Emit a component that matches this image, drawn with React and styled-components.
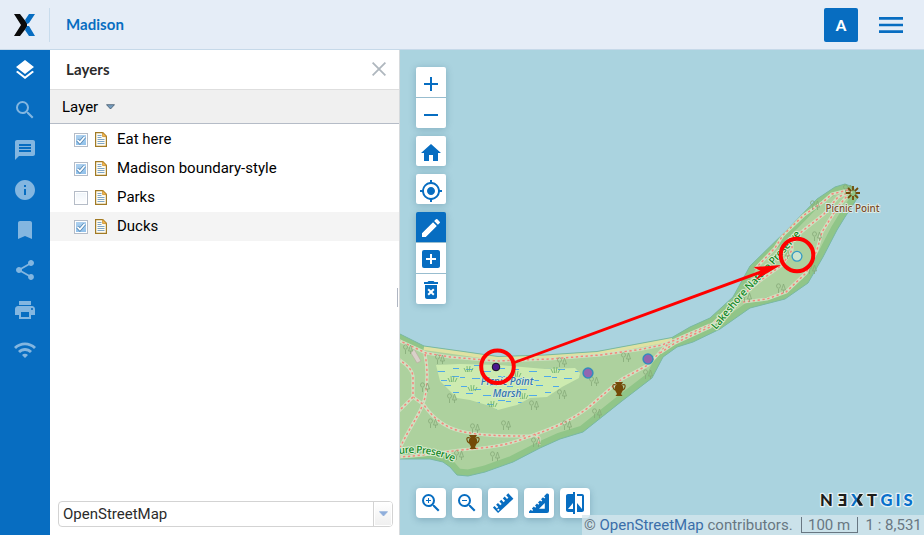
import React from "react";
import styled, { createGlobalStyle, css } from "styled-components";
import {
  MdLayers, MdSearch, MdMessage, MdInfo, MdBookmark, MdShare, MdPrint, MdWifi,
  MdAdd, MdRemove, MdHome, MdMyLocation, MdEdit, MdAddBox, MdDeleteForever,
  MdZoomIn, MdZoomOut, MdCompare,
} from "react-icons/md";

const BLUE = "#076dc1";

const Global = createGlobalStyle`
  * { box-sizing: border-box; }
  body { margin: 0; overflow: hidden; font-family: Roboto, "Liberation Sans", sans-serif; }
  svg { display: block; }
`;

const Page = styled.div`
  display: flex;
  flex-direction: column;
  width: 924px;
  height: 535px;
`;
const Header = styled.header`
  display: flex;
  align-items: center;
  height: 50px;
  flex: none;
  padding-right: 21px;
  background: #e5edf7;
  border-bottom: 1px solid #c6d9e9;
`;
const LogoBox = styled.div`
  display: flex;
  align-items: center;
  justify-content: center;
  width: 50px;
  height: 34px;
  border-right: 1px solid #c9dcec;
`;
const Title = styled.h1`
  margin: 0 auto 0 16px;
  padding-bottom: 1px;
  font: 700 15px/20px Lato, sans-serif;
  letter-spacing: 0.05px;
  color: ${BLUE};
`;
const Avatar = styled.button`
  width: 34px;
  height: 34px;
  margin: 1px 21px 0 0;
  padding: 0;
  border: 0;
  border-radius: 2px;
  background: ${BLUE};
  color: #fff;
  font: 900 15px/33px Lato, sans-serif;
`;
const Body = styled.div`
  display: flex;
  flex: 1;
  min-height: 0;
`;
const Sidebar = styled.nav`
  display: flex;
  flex-direction: column;
  width: 50px;
  background: ${BLUE};
`;
const NavItem = styled.div`
  display: grid;
  place-items: center;
  height: 40px;
  font-size: 24px;
  color: ${(p) => (p.$active ? "#fff" : "#83b6e0")};
`;
const Panel = styled.section`
  display: flex;
  flex-direction: column;
  width: 350px;
  background: #fff;
  border-right: 1px solid #d6dadd;
`;
const PanelHead = styled.div`
  display: flex;
  align-items: center;
  justify-content: space-between;
  height: 40px;
  padding: 0 13px 1px 16px;
  border-bottom: 1px solid #dedede;
`;
const PanelTitle = styled.h2`
  margin: 0;
  font: 700 15px/20px Lato, sans-serif;
  letter-spacing: 0.1px;
  color: #2b2b2b;
`;
const ColumnHead = styled.div`
  display: flex;
  align-items: center;
  gap: 8px;
  height: 34px;
  padding-left: 12px;
  font-size: 15px;
  background: #f0f0f0;
  border-bottom: 1px solid #b5bcc7;
`;
const Tree = styled.div`
  display: flex;
  flex-direction: column;
  padding-top: 1px;
  flex: 1;
`;
const Row = styled.div`
  display: flex;
  align-items: center;
  height: 29px;
  padding-left: 24px;
  font-size: 15px;
  color: #000;
  background: ${(p) => (p.$hover ? "#f4f4f4" : "transparent")};
`;
const RowLabel = styled.span`
  margin-left: 10px;
  line-height: 20px;
  padding-bottom: 1px;
`;
const CheckBox = styled.span`
  display: grid;
  place-items: center;
  width: 14px;
  height: 14px;
  margin-right: 7px;
  border: 1px solid #b5bcc7;
  box-shadow: inset 0 0 0 1px #fff;
  background: ${(p) => (p.$on ? "linear-gradient(#b1d2ef, #8fc0ea)" : "linear-gradient(#eef4f9, #fff)")};
`;
const Grip = styled.div`
  position: absolute;
  left: -3px;
  top: 238px;
  width: 1px;
  height: 19px;
  background: #b0b6c2;
`;
const Select = styled.div`
  display: flex;
  height: 26px;
  margin: 0 6px 8px 8px;
  border: 1px solid #d3d3d3;
  border-radius: 4px;
  overflow: hidden;
  font-size: 15px;
  line-height: 25px;
  color: #2b2b2b;
`;
const SelectValue = styled.span`
  flex: 1;
  padding-left: 4px;
`;
const SelectArrow = styled.span`
  display: grid;
  place-items: center;
  width: 19px;
  border-left: 1px solid #d3d3d3;
  box-shadow: inset 0 0 0 1px #fff;
  background: linear-gradient(#fff, #efefef);
`;
const MapArea = styled.main`
  position: relative;
  flex: 1;
  background: #aad3df;
`;
const MapTools = styled.div`
  position: absolute;
  left: 16px;
  top: 17px;
  display: flex;
  flex-direction: column;
  gap: 8px;
`;
const BottomTools = styled.div`
  position: absolute;
  left: 16px;
  top: 438px;
  display: flex;
  gap: 6px;
`;
const Group = styled.div`
  display: flex;
  flex-direction: column;
  gap: 1px;
  border-radius: 2px;
  overflow: hidden;
  background: #98bdcf;
  box-shadow: 0 1px 7px rgba(30, 80, 110, 0.28);
`;
const ToolButton = styled.button`
  display: grid;
  place-items: center;
  width: 30px;
  height: 30px;
  padding: ${(p) => p.$drop || 0}px 0 0;
  border: 0;
  font-size: 24px;
  color: ${(p) => (p.$active ? "#fff" : BLUE)};
  background: ${(p) => (p.$active ? BLUE : "#fff")};
  ${(p) => p.$floating && css`
    border-radius: 4px;
    box-shadow: 0 2px 7px rgba(30, 80, 110, 0.28);
  `}
`;
const Attribution = styled.div`
  position: absolute;
  right: 0;
  bottom: 0;
  display: flex;
  align-items: center;
  width: 342px;
  height: 20px;
  padding-left: 2px;
  background: rgba(213, 230, 236, 0.76);
  color: #687782;
  font-size: 15px;
  line-height: 20px;
  white-space: pre;
`;
const Link = styled.span`
  color: #3a6ea9;
`;
const ScaleLine = styled.span`
  width: 57px;
  height: 16px;
  margin: 0 8px 0 8px;
  border: 1px solid #687782;
  border-top: 0;
  text-align: center;
  line-height: 16px;
`;

const NAV = [MdLayers, MdSearch, MdMessage, MdInfo, MdBookmark, MdShare, MdPrint, MdWifi];
const LAYERS = [
  { name: "Eat here", on: true },
  { name: "Madison boundary-style", on: true },
  { name: "Parks", on: false },
  { name: "Ducks", on: true, hover: true },
];

const BrandMark = () => (
  <svg width="22" height="22" viewBox="0 0 22 22">
    <path d="M0 0h6l7 9v4l-7 9H0l7-11z" fill="#0a0a0a" />
    <path d="M15 0h6l-6 9-2 1-2-4zM11 16l2-4h2l6 10h-6z" fill={BLUE} />
  </svg>
);
const BurgerIcon = () => (
  <svg width="24" height="18" viewBox="0 0 24 18">
    <path d="M0 1h24v2.700H0zM0 7.700h24v2.600H0zM0 14.300h24V17H0z" fill={BLUE} />
  </svg>
);
const CloseMark = () => (
  <svg width="14" height="14" viewBox="0 0 14 14">
    <path d="M.6.6l12.800 12.800M13.400.6L.6 13.400" stroke="#afb7be" strokeWidth="1.8" />
  </svg>
);
const Caret = ({ fill, stroke }) => (
  <svg width="9" height="6" viewBox="0 0 9 6">
    <path d="M.5 .7h8L4.5 5z" fill={fill} stroke={stroke} strokeWidth="0.8" />
  </svg>
);
const PageIcon = () => (
  <svg width="12" height="15" viewBox="0 0 12 15">
    <path d="M.6.6h7.2l3.600 3.600v10.200H.6z" fill="#fffdf3" stroke="#a17a24" strokeWidth="1.200" />
    <path d="M7.600.6v4h3.800z" fill="#f4ba50" stroke="#c58c28" strokeWidth=".8" />
    <path d="M2.500 3.500h4M2.500 5.500h4M2.500 7.500h7M2.500 9.500h7M2.500 11.500h7" stroke="#7fa6c8" />
  </svg>
);
const Tick = () => (
  <svg width="10" height="10" viewBox="0 0 10 10">
    <path d="M1.500 5l2.400 2.500L8.600 2" fill="none" stroke="#5689b6" strokeWidth="3.400" />
    <path d="M1.500 5l2.400 2.500L8.600 2" fill="none" stroke="#fff" strokeWidth="1.800" />
  </svg>
);
const RulerIcon = () => (
  <svg width="22" height="22" viewBox="0 0 22 22">
    <g transform="rotate(-43 11 11)">
      <path d="M.5 7.500h2.300v3.300h2V7.500h2.600v3.300h2V7.500H12v3.300h2V7.500h2.600v3.300h2V7.500h2.900v7.500h-21z" fill={BLUE} />
      <circle cx="3" cy="12.800" r="1" fill="#fff" />
    </g>
  </svg>
);
const SetSquareIcon = () => (
  <svg width="20" height="20" viewBox="0 0 20 20">
    <path fillRule="evenodd" fill={BLUE}
      d="M0 20v-1.500l1.800-1.800 1.300 1.200 1-1-1.200-1.300 2-2 1.300 1.200 1-1L6 12.500l2-2 1.300 1.200 1-1L9 9.400l2-2 1.300 1.200 1-1L12 6.300l2-2 1.300 1.200 1-1L15 3.200 17.700.5Q20 0 20 2v16q0 2-2 2zM10 15.800h5.800V10z" />
  </svg>
);

const LAND = "M390 329L400 334 424 346 460 351 498 356.5 545 355 597 351.500 672 337.500 690 327 710 318 733 297 750 266 787 230 817 199 835 187 845 184 853 187 858 197 845 217 837 230 823 257 808 283 785 299 750 308 720 329 693 342 677 347 663 357 652 378 622 401 583 432 560 439 540 448 513 462 485 472 468 476 457 475 450 467 443 462 430 459 400 459 390 460Z";
const BEACH = "M424 347L460 352 498 357.500 545 356 597 352.500 672 338.500";
const MARSH = "M436 365L460 364 500 365 545 369 575 368 580 373 579 378 562 387 547 397 530 398 517 405 498 410 490 406 470 400 457 398 448 389 440 381Z";
const PATHS = [
  "M398 340L426 353 450 357 497 361 550 359 600 355 640 349.500 662 345 675 340 710 325",
  "M425 354C428 370 427 380 426 391 424 411 412 421 398 452",
  "M398 359C408 365 412 370 413 376L413 397 424 405C432 417 444 427 460 431 480 436 505 436 534 436",
  "M413 397L398 412",
  "M398 457C420 456 438 453 460 450 485 448 506 446 525 438 545 431 567 424 589 407L612 387 622 379 648 365 661 351 668 344",
  "M534 434L539 438 539 445",
  "M660 353L675 343 710 327 717 320 735 302 757 283 782 265 792 250 792 240 805 229 824 214 838 197 852 191",
  "M755 269L775 248 783 235 804 215 823 202 832 194 848 190",
  "M743 302L767 299 786 292 806 273 817 250 822 232 837 208 847 196",
];
const TREES = [[408, 349], [440, 359], [425, 387], [452, 398], [433, 423], [475, 428], [506, 425], [534, 405], [495, 456], [536, 442], [562, 362], [626, 357], [594, 381], [562, 394], [597, 413], [567, 425], [648, 374], [781, 288], [785, 254], [817, 236], [815, 205], [812, 269], [848, 189], [747, 297], [459, 455]];
const REEDS = [[452, 379], [472, 388], [492, 404], [516, 374], [523, 396], [468, 369], [555, 370]];
const URNS = [[473, 442], [619, 389]];

const MapCanvas = () => (
  <svg width="524" height="485" viewBox="400 50 524 485">
    <defs>
      <clipPath id="land"><path d={LAND} /></clipPath>
      <pattern id="water" width="46" height="24" patternUnits="userSpaceOnUse">
        <path d="M1 2.500h6M14 5.500h7M30 1.500h7M6 9.500h7M23 11.500h8M39 8.500h6M0 17.500h5M12 18.500h8M27 20.500h6M38 16.500h7" stroke="#4fa9ea" strokeWidth="1" />
      </pattern>
      <path id="shoreLabel" d="M716 330L742 299 771 268 802 233" />
      <path id="southLabel" d="M399 454Q430 450 456 463" />
    </defs>
    <path d={LAND} fill="#add19e" />
    <g clipPath="url(#land)">
      <path d={LAND} fill="none" stroke="#90c588" strokeWidth="13" />
      <path d={BEACH} fill="none" stroke="#add19e" strokeWidth="14" />
      <path d={BEACH} fill="none" stroke="#dfe2a3" strokeWidth="6" />
    </g>
    <path d={LAND} fill="none" stroke="#78b9a4" strokeWidth="1" />
    <path d="M414 349L421 361 417 363 411 353Z" fill="#d9d0c9" stroke="#b9a99c" strokeWidth=".6" />
    <path d={MARSH} fill="#cdebb0" />
    <path d={MARSH} fill="url(#water)" />
    <g clipPath="url(#land)">
      {PATHS.map((d) => (
        <g key={d} fill="none">
          <path d={d} stroke="#d0e0c1" strokeWidth="3.200" strokeLinejoin="round" />
          <path d={d} stroke="#f5867b" strokeWidth="1.500" strokeDasharray="2.300 2.600" />
        </g>
      ))}
    </g>
    {TREES.map(([x, y]) => (
      <path key={`${x}-${y}`} transform={`translate(${x - 5} ${y - 5})`} fill="none" stroke="#86a979" strokeWidth=".8"
        d="M2.500 6V10M.5 3a2 2.200 0 1 0 4 0a2 2.200 0 1 0-4 0M7.500 1L5.500 7H9.500ZM7.500 7V10" />
    ))}
    {REEDS.map(([x, y]) => (
      <path key={`${x}-${y}`} transform={`translate(${x - 4} ${y - 3})`} fill="none" stroke="#6fb36f" strokeWidth=".9"
        d="M0 2L2 6M3 0L3.500 6M6 0L5 6M9 2L7 6" />
    ))}
    <g fontFamily='"Noto Sans", sans-serif'>
      <g fontSize="10.200" fontWeight="500" fill="#0f8523" stroke="#dcedd2" strokeWidth="2" paintOrder="stroke" strokeLinejoin="round">
        <text><textPath href="#shoreLabel" textLength="128">Lakeshore Nature Preserve</textPath></text>
        <text><textPath href="#southLabel" textLength="56">ure Preserve</textPath></text>
      </g>
      <text fontSize="10" fontWeight="500" fontStyle="italic" fill="#2f72b5" stroke="#dcefcf" strokeWidth="1.600" paintOrder="stroke" textAnchor="middle">
        <tspan x="507" y="385.300">Picnic Point</tspan>
        <tspan x="507" y="397.300">Marsh</tspan>
      </text>
      <text x="852.500" y="211.500" textAnchor="middle" textLength="54" fontSize="10" fontWeight="500" fill="#7a4a28" stroke="#dcebe6" strokeWidth="1.800" paintOrder="stroke">Picnic Point</text>
    </g>
    <path d="M853 186v4.500M853 196v4M846 193h4.500M855.500 193h4.500M848 188l3.200 3.200M858 188l-3.200 3.200M848 198l3.200-3.200M858 198l-3.200-3.200" stroke="#734a08" strokeWidth="1.800" />
    {URNS.map(([x, y]) => (
      <g key={x} transform={`translate(${x} ${y})`}>
        <path d="M-4-7H4L2.500-4.500Q6-1 3 3L2 5 3.500 7H-3.500L-2 5-3 3Q-6-1-2.500-4.500Z" fill="#734a08" />
        <path d="M-3-4C-8-6-6 0-4 1M3-4C8-6 6 0 4 1" fill="none" stroke="#734a08" strokeWidth="1.100" />
      </g>
    ))}
    <g fill="#9266b0" stroke="#348bbd" strokeWidth="1.500">
      <circle cx="588" cy="373" r="4.900" />
      <circle cx="648" cy="359" r="4.900" />
    </g>
    <circle cx="496" cy="367" r="3.800" fill="#4b188f" stroke="#15151d" />
    <circle cx="797" cy="256.300" r="4.900" fill="#cde4ce" stroke="#359ac5" strokeWidth="1.300" />
    <path d="M513 363L765 270.500" stroke="#f00" strokeWidth="2.900" />
    <path d="M781 265L753.500 267 761.500 271.500 755.500 280Z" fill="#f00" />
    <g fill="none" stroke="#f00" strokeWidth="4">
      <circle cx="497.500" cy="366.700" r="16.300" />
      <circle cx="797" cy="255" r="16.300" />
    </g>
    <g fontFamily="Lato, sans-serif" fontWeight="900" fontSize="16.500" fill="#1d1d1b" stroke="#e5f1f5" strokeWidth="2.500" paintOrder="stroke" strokeLinejoin="round">
      <text x="820" y="505.500">N</text>
      <text transform="translate(847.500 505.500) scale(-1 1)">E</text>
      <text x="851" y="505.500" fill={BLUE}>X</text>
      <text x="867" y="505.500">T</text>
      <text x="880.500" y="505.500" fill="#0870cc">G</text>
      <text x="895.500" y="505.500" fill="#0870cc">I</text>
      <text x="903.500" y="505.500" fill="#0870cc">S</text>
    </g>
    <path d="M859.500 494h3.500l-3.800 5.500 4 6h-3.800l-2.800-5z" fill="#1d1d1b" />
  </svg>
);

export default function App() {
  return (
    <Page>
      <Global />
      <Header>
        <LogoBox><BrandMark /></LogoBox>
        <Title>Madison</Title>
        <Avatar>A</Avatar>
        <BurgerIcon />
      </Header>
      <Body>
        <Sidebar>
          {NAV.map((Icon, i) => <NavItem key={i} $active={i === 0}><Icon /></NavItem>)}
        </Sidebar>
        <Panel>
          <PanelHead><PanelTitle>Layers</PanelTitle><CloseMark /></PanelHead>
          <ColumnHead>Layer <Caret fill="#759dc0" stroke="#42576a" /></ColumnHead>
          <Tree>
            {LAYERS.map((l) => (
              <Row key={l.name} $hover={l.hover}>
                <CheckBox $on={l.on}>{l.on && <Tick />}</CheckBox>
                <PageIcon />
                <RowLabel>{l.name}</RowLabel>
              </Row>
            ))}
          </Tree>
          <Select>
            <SelectValue>OpenStreetMap</SelectValue>
            <SelectArrow><Caret fill="#8faedb" stroke="#8faedb" /></SelectArrow>
          </Select>
        </Panel>
        <MapArea>
          <MapCanvas />
          <Grip />
          <MapTools>
            <Group>
              <ToolButton $drop={3}><MdAdd /></ToolButton>
              <ToolButton $drop={3}><MdRemove /></ToolButton>
            </Group>
            <Group><ToolButton $drop={3}><MdHome /></ToolButton></Group>
            <Group><ToolButton $drop={3}><MdMyLocation /></ToolButton></Group>
            <Group>
              <ToolButton $active $drop={2}><MdEdit /></ToolButton>
              <ToolButton $drop={2}><MdAddBox /></ToolButton>
              <ToolButton $drop={2}><MdDeleteForever /></ToolButton>
            </Group>
          </MapTools>
          <BottomTools>
            <ToolButton $floating><MdZoomIn /></ToolButton>
            <ToolButton $floating><MdZoomOut /></ToolButton>
            <ToolButton $floating><RulerIcon /></ToolButton>
            <ToolButton $floating><SetSquareIcon /></ToolButton>
            <ToolButton $floating><MdCompare /></ToolButton>
          </BottomTools>
          <Attribution>
            © <Link>OpenStreetMap</Link> contributors.
            <ScaleLine>100 m</ScaleLine>1 : 8,531
          </Attribution>
        </MapArea>
      </Body>
    </Page>
  );
}
